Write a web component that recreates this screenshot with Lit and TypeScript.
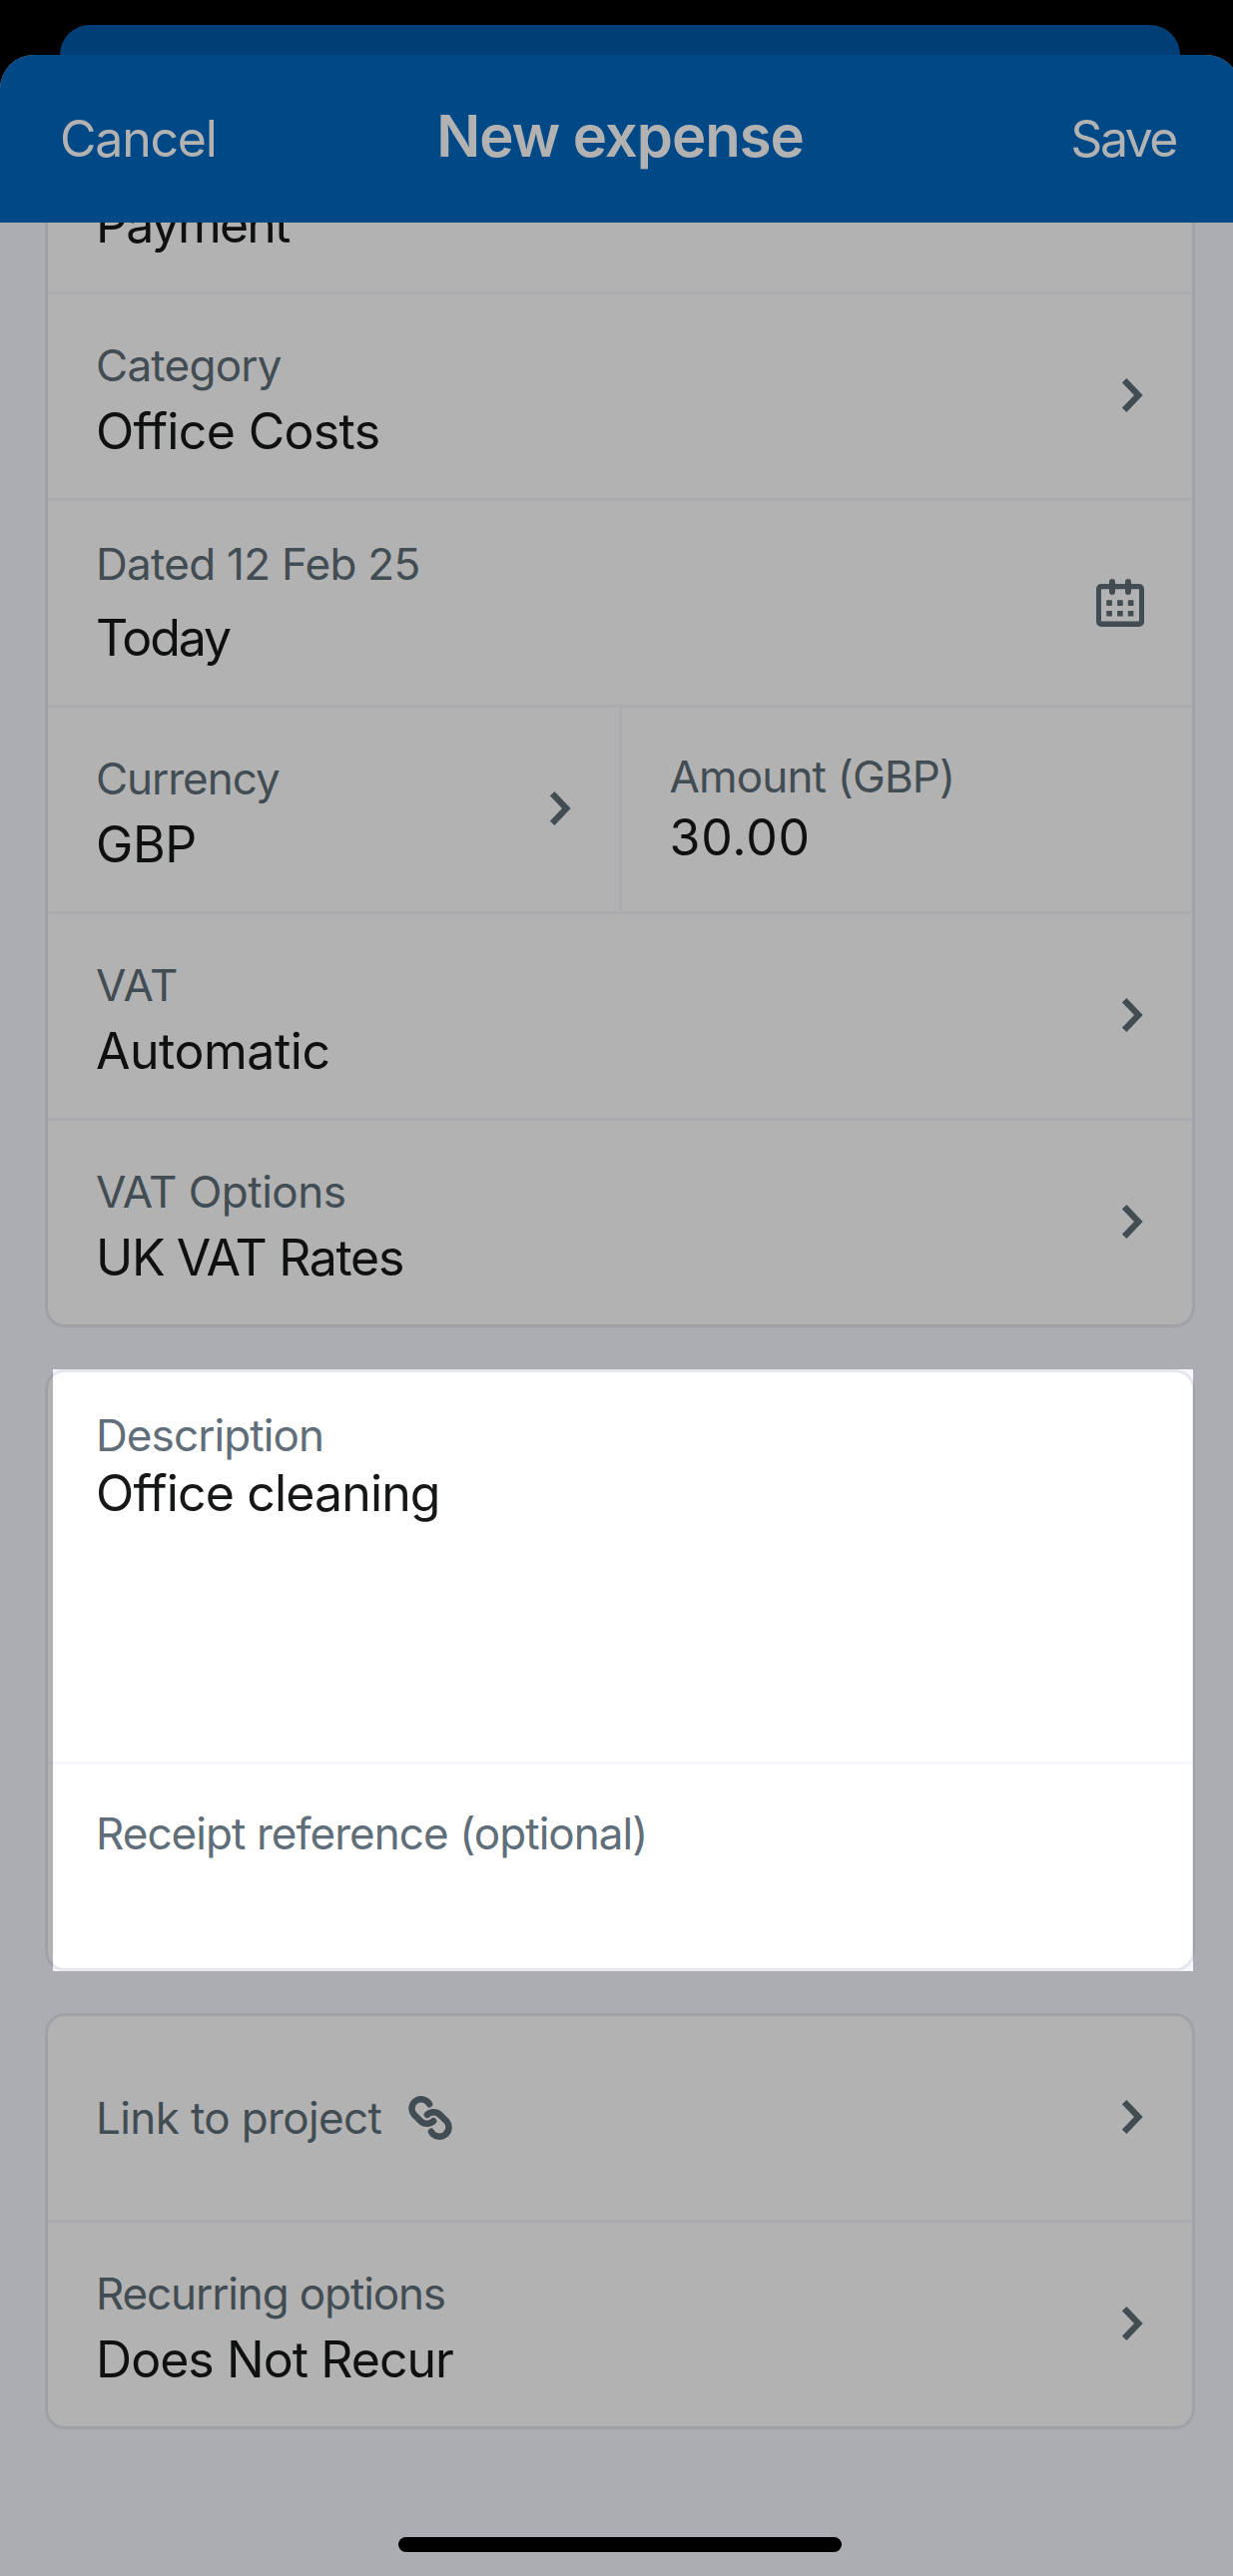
import { LitElement, html, svg, css, nothing } from "lit";
import { customElement, property } from "lit/decorators.js";
import { classMap } from "lit/directives/class-map.js";
import { styleMap } from "lit/directives/style-map.js";

interface Line {
  text: string;
  tracking: number;
}

const chevron = html`<svg class="chevron" width="21" height="34" viewBox="0 0 21 34" fill="none" stroke="currentColor" stroke-width="6.2">
  ${svg`<path d="M2.2 2.2 L16.4 17 L2.2 31.8" />`}
</svg>`;

const calendar = html`<svg class="calendar" width="48" height="48" viewBox="0 0 48 48" fill="currentColor">
  ${svg`
    <path fill-rule="evenodd" d="M5 5H43A5 5 0 0 1 48 10V43A5 5 0 0 1 43 48H5A5 5 0 0 1 0 43V10A5 5 0 0 1 5 5ZM5 10.3V42.6H43V10.3Z" />
    <rect x="13" y="0" width="6" height="16" rx="3" />
    <rect x="29" y="0" width="6" height="16" rx="3" />
    <path d="M10.3 21.3h5.6v5.6h-5.6zM21.1 21.3h5.6v5.6h-5.6zM31.8 21.3h5.6v5.6h-5.6zM10.3 32h5.6v5.6h-5.6zM21.1 32h5.6v5.6h-5.6zM31.8 32h5.6v5.6h-5.6z" />
  `}
</svg>`;

const link = html`<svg class="link" width="44" height="44" viewBox="0 0 43.7 43.7" fill="none" stroke="currentColor" stroke-width="6.4" stroke-linecap="round">
  ${svg`
    <path d="M21 8.2 A9.3 9.3 0 1 0 5.8 18.7 L12.4 25.2 A9.2 9.2 0 0 0 25 25" />
    <path transform="rotate(180 21.85 21.85)" d="M21 8.2 A9.3 9.3 0 1 0 5.8 18.7 L12.4 25.2 A9.2 9.2 0 0 0 25 25" />
  `}
</svg>`;

@customElement("form-field")
class FormField extends LitElement {
  @property({ attribute: false }) label?: Line;
  @property({ attribute: false }) value?: Line;
  @property() icon: "" | "chevron" | "calendar" = "";
  @property() variant = "select";
  @property({ type: Boolean }) linked = false;

  static styles = css`
    :host {
      display: block;
      min-width: 0;
    }
    .field {
      box-sizing: border-box;
      height: 204px;
      padding: 0 48px;
      display: flex;
      justify-content: space-between;
      align-items: center;
    }
    .lines {
      align-self: stretch;
      display: flex;
      flex-direction: column;
      padding-top: 44px;
      gap: 9px;
      white-space: nowrap;
    }
    .label {
      display: flex;
      align-items: center;
      gap: 27px;
      font-size: 44px;
      line-height: 54px;
      color: #5f6e78;
    }
    .value {
      font-size: 50px;
      line-height: 60px;
      color: #161718;
    }
    .date .lines {
      padding-top: 36px;
      gap: 17px;
    }
    .input .lines {
      padding-top: 42px;
      gap: 4px;
    }
    .single .lines {
      padding-top: 75px;
    }
    .multiline {
      height: 390px;
    }
    .multiline .lines {
      padding-top: 36px;
      gap: 1px;
    }
    .clipped {
      height: 69px;
    }
    .clipped .lines {
      justify-content: flex-end;
      padding: 0 0 37px;
    }
    svg {
      display: block;
      flex: none;
      color: #5f6e78;
    }
    .chevron {
      margin: 0 1px 3px 0;
    }
    .link {
      margin: 0;
    }
  `;

  render() {
    return html`<div class=${classMap({ field: true, [this.variant]: true })}>
      <div class="lines">
        ${this.label
          ? html`<div class="label">
              <span style=${styleMap({ letterSpacing: `${this.label.tracking}px` })}>${this.label.text}</span>
              ${this.linked ? link : nothing}
            </div>`
          : nothing}
        ${this.value
          ? html`<div class="value" style=${styleMap({ letterSpacing: `${this.value.tracking}px` })}>${this.value.text}</div>`
          : nothing}
      </div>
      ${this.icon === "chevron" ? chevron : this.icon === "calendar" ? calendar : nothing}
    </div>`;
  }
}

const line = (text: string, tracking: number): Line => ({ text, tracking });

@customElement("app-root")
class AppRoot extends LitElement {
  static styles = css`
    :host {
      display: block;
      position: relative;
      width: 1235px;
      height: 2581px;
      overflow: hidden;
      background: #000;
      font-family: Inter, "Liberation Sans", sans-serif;
    }
    .screen {
      width: 1242px;
      height: 2581px;
      box-sizing: border-box;
      padding-top: 25px;
      display: flex;
      flex-direction: column;
    }
    .behind {
      flex: none;
      height: 30px;
      margin: 0 60px;
      border-radius: 32px 32px 0 0;
      background: #005aa8;
    }
    .sheet {
      flex: 1;
      display: flex;
      flex-direction: column;
      border-radius: 34px 34px 0 0;
      background: #f7f8ff;
    }
    header {
      flex: none;
      box-sizing: border-box;
      height: 168px;
      padding: 51px 60px 0;
      display: grid;
      grid-template-columns: 1fr auto 1fr;
      align-items: baseline;
      border-radius: 34px 34px 0 0;
      background: #0068c0;
      color: #fff;
      font-size: 50px;
      line-height: 60px;
    }
    .cancel {
      letter-spacing: -1.23px;
    }
    .title {
      margin: 0;
      font-size: 58px;
      font-weight: 600;
      letter-spacing: -1.04px;
    }
    .save {
      justify-self: end;
      margin-right: 4px;
      letter-spacing: -2.5px;
    }
    main {
      flex: 1;
      padding: 0 45px;
      display: flex;
      flex-direction: column;
      gap: 42px;
    }
    .card {
      position: relative;
      border: 3px solid #e6e7ee;
      border-radius: 20px;
      background: #fff;
    }
    .card.scrolled {
      border-top: 0;
      border-top-left-radius: 0;
      border-top-right-radius: 0;
      overflow: hidden;
    }
    .card > * + * {
      border-top: 3px solid #f5f6fc;
    }
    .pair {
      display: grid;
      grid-template-columns: 1fr 1fr;
    }
    .pair > * + * {
      border-left: 3px solid #f5f6fc;
      margin-left: -1.5px;
    }
    .card > .spotlight {
      position: absolute;
      z-index: 2;
      inset: -3px -1px -3px 5px;
      border: 0;
      box-shadow: 0 0 0 3000px rgba(0, 0, 0, 0.3);
      pointer-events: none;
    }
    .home-bar {
      position: absolute;
      z-index: 3;
      left: 399px;
      bottom: 24px;
      width: 444px;
      height: 15px;
      border-radius: 8px;
      background: #000;
    }
  `;

  render() {
    return html`
      <div class="screen">
        <div class="behind"></div>
        <div class="sheet">
          <header>
            <span class="cancel">Cancel</span>
            <h1 class="title">New expense</h1>
            <span class="save">Save</span>
          </header>
          <main>
            <section class="card scrolled">
              <form-field variant="clipped" .value=${line("Payment", -1.8)}></form-field>
              <form-field icon="chevron" .label=${line("Category", -0.75)} .value=${line("Office Costs", -0.65)}></form-field>
              <form-field variant="date" icon="calendar" .label=${line("Dated 12 Feb 25", -0.72)} .value=${line("Today", -2.05)}></form-field>
              <div class="pair">
                <form-field icon="chevron" .label=${line("Currency", -1.04)} .value=${line("GBP", -0.36)}></form-field>
                <form-field variant="input" .label=${line("Amount (GBP)", -0.84)} .value=${line("30.00", 0.8)}></form-field>
              </div>
              <form-field icon="chevron" .label=${line("VAT", 0.07)} .value=${line("Automatic", -0.47)}></form-field>
              <form-field icon="chevron" .label=${line("VAT Options", -0.51)} .value=${line("UK VAT Rates", -1.33)}></form-field>
            </section>
            <section class="card">
              <form-field variant="multiline" .label=${line("Description", -0.9)} .value=${line("Office cleaning", -0.85)}></form-field>
              <form-field variant="input" .label=${line("Receipt reference (optional)", -0.95)}></form-field>
              <div class="spotlight"></div>
            </section>
            <section class="card">
              <form-field variant="single" icon="chevron" linked .label=${line("Link to project", -0.63)}></form-field>
              <form-field icon="chevron" .label=${line("Recurring options", -1.12)} .value=${line("Does Not Recur", -0.95)}></form-field>
            </section>
          </main>
        </div>
      </div>
      <div class="home-bar"></div>
    `;
  }
}
